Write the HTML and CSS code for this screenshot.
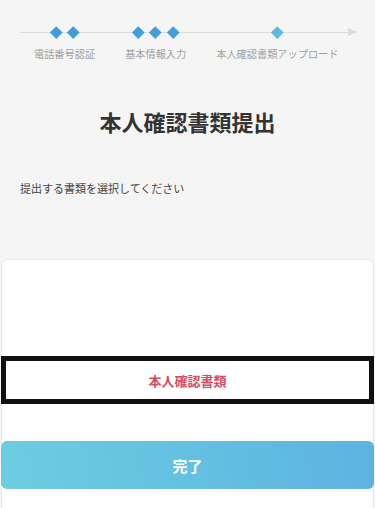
FILE: index.html
```html
<!DOCTYPE html>
<html lang="ja">
<head>
<meta charset="utf-8">
<link rel="stylesheet" href="styles.css">
</head>
<body>
<div class="steps">
  <div class="step">
    <div class="marks"><span class="dia"></span><span class="dia"></span></div>
    <div class="label">電話番号認証</div>
  </div>
  <div class="step">
    <div class="marks"><span class="dia"></span><span class="dia"></span><span class="dia"></span></div>
    <div class="label">基本情報入力</div>
  </div>
  <div class="step">
    <div class="marks"><span class="dia light"></span></div>
    <div class="label">本人確認書類アップロード</div>
  </div>
</div>
<h1 class="title">本人確認書類提出</h1>
<p class="lead">提出する書類を選択してください</p>
<div class="card">
  <div class="option">本人確認書類</div>
  <button class="done">完了</button>
</div>
</body>
</html>
```
FILE: styles.css
```css
html, body {
  margin: 0;
  padding: 0;
  height: 100%;
  background: #f5f5f5;
  font-family: "Noto Sans CJK JP", "Noto Sans", sans-serif;
  overflow: hidden;
}
.steps {
  position: relative;
  display: flex;
  gap: 30px;
  padding: 26px 0 0 34px;
  height: 46px;
}
.steps::before {
  content: "";
  position: absolute;
  left: 20px;
  right: 26px;
  top: 32px;
  height: 1px;
  background: #dcdcdc;
}
.steps::after {
  content: "";
  position: absolute;
  right: 17px;
  top: 28px;
  border-left: 10px solid #dcdcdc;
  border-top: 4.5px solid transparent;
  border-bottom: 4.5px solid transparent;
}
.step {
  display: flex;
  flex-direction: column;
  align-items: center;
  position: relative;
  z-index: 1;
}
.marks {
  display: flex;
  gap: 9px;
  height: 12px;
  align-items: center;
}
.dia {
  width: 8.5px;
  height: 8.5px;
  background: #3f9fdc;
  transform: rotate(45deg);
}
.dia.light {
  background: #56bde6;
}
.label {
  margin-top: 9px;
  font-size: 10.2px;
  color: #a0a0a0;
  line-height: 14px;
  white-space: nowrap;
}
.title {
  margin: 34px 0 0;
  text-align: center;
  font-size: 22px;
  font-weight: bold;
  color: #333;
  line-height: 30px;
}
.lead {
  margin: 44px 0 0 20px;
  font-size: 11px;
  color: #444;
  line-height: 16px;
}
.card {
  box-sizing: border-box;
  margin: 63px 1px 0;
  background: #fff;
  border: 1px solid #e8e8e8;
  border-bottom: none;
  border-radius: 6px 6px 0 0;
  padding-top: 96px;
  height: 250px;
}
.option {
  margin: 0 -1px;
  height: 38px;
  border: 5px solid #111;
  display: flex;
  align-items: center;
  justify-content: center;
  color: #d24d68;
  font-size: 13px;
  font-weight: bold;
}
.done {
  display: block;
  margin: 37px -1px 0;
  width: calc(100% + 2px);
  height: 48px;
  border: none;
  border-radius: 6px;
  background: linear-gradient(80deg, #6dcde0 0%, #5cb3e2 100%);
  color: #fff;
  font-family: "Noto Sans CJK JP", sans-serif;
  font-size: 15px;
  font-weight: bold;
}
```
